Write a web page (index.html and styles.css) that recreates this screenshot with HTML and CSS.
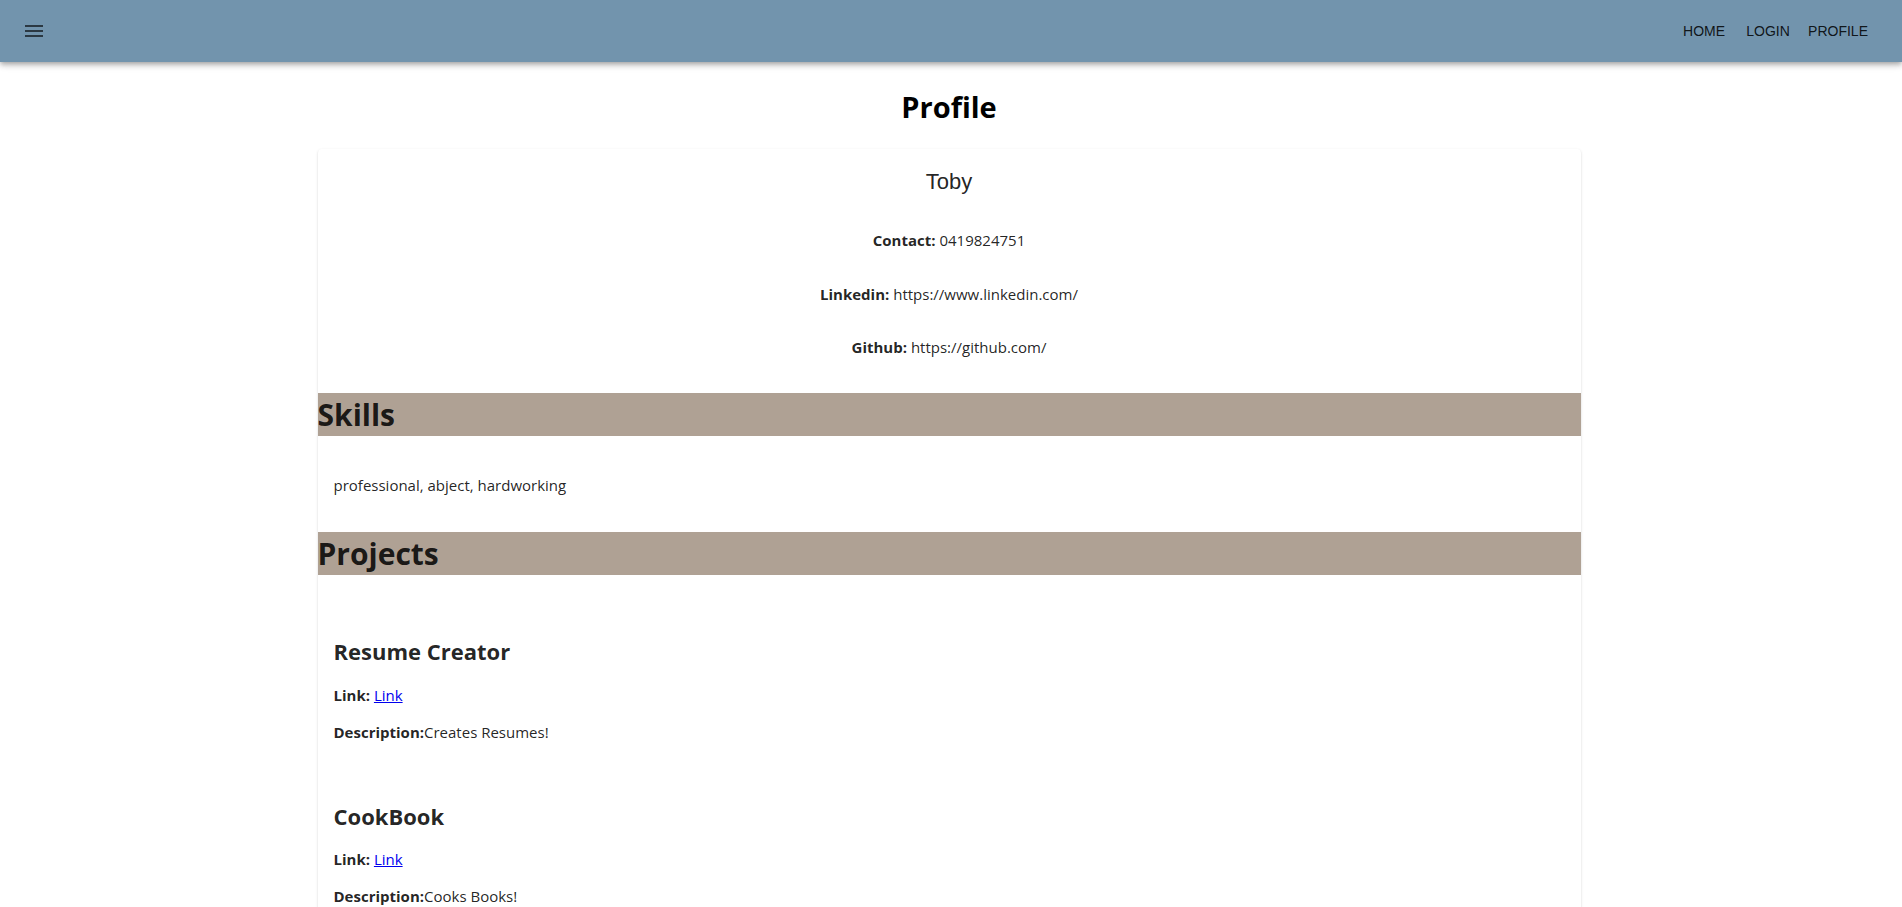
FILE: index.html
```html
<!DOCTYPE html>
<html lang="en">
<head>
<meta charset="utf-8">
<title>Profile</title>
<link rel="stylesheet" href="styles.css">
</head>
<body>
<header class="appbar">
  <button class="menu-btn" aria-label="menu">
    <svg class="menu-icon" viewBox="0 0 24 24" width="24" height="24"><path d="M3 18h18v-2H3v2zm0-5h18v-2H3v2zm0-7v2h18V6H3z"/></svg>
  </button>
  <nav class="nav">
    <a class="nav-btn" href="#">Home</a>
    <a class="nav-btn" href="#">Login</a>
    <a class="nav-btn" href="#">Profile</a>
  </nav>
</header>
<main class="page">
  <h1 class="page-title">Profile</h1>
  <section class="card">
    <div class="card-head">
      <div class="name">Toby</div>
      <div class="contacts">
        <p class="contact-row"><b>Contact:</b> 0419824751</p>
        <p class="contact-row"><b>Linkedin:</b> https://www.linkedin.com/</p>
        <p class="contact-row"><b>Github:</b> https://github.com/</p>
      </div>
    </div>
    <h2 class="bar">Skills</h2>
    <div class="skills">professional, abject, hardworking</div>
    <h2 class="bar">Projects</h2>
    <div class="project">
      <h3 class="project-title">Resume Creator</h3>
      <p class="project-line"><b>Link:</b> <a href="#">Link</a></p>
      <p class="project-line"><b>Description:</b>Creates Resumes!</p>
    </div>
    <div class="project">
      <h3 class="project-title">CookBook</h3>
      <p class="project-line"><b>Link:</b> <a href="#">Link</a></p>
      <p class="project-line"><b>Description:</b>Cooks Books!</p>
    </div>
    <div class="project">
      <h3 class="project-title">Portfolio</h3>
      <p class="project-line"><b>Link:</b> <a href="#">Link</a></p>
      <p class="project-line"><b>Description:</b>Shows Projects!</p>
    </div>
  </section>
</main>
</body>
</html>
```

FILE: styles.css
```css
* { box-sizing: border-box; }

body {
  margin: 0;
  background: #ffffff;
  font-family: "Open Sans", "Noto Sans", sans-serif;
  font-size: 15px;
  color: rgba(0, 0, 0, 0.87);
}

.appbar {
  position: relative;
  z-index: 2;
  height: 62px;
  display: flex;
  align-items: center;
  justify-content: space-between;
  padding: 0 26px 0 22px;
  background: #7294ad;
  box-shadow: 0px 2px 4px -1px rgba(0,0,0,0.2), 0px 4px 5px 0px rgba(0,0,0,0.14), 0px 1px 10px 0px rgba(0,0,0,0.12);
}

.menu-btn {
  display: flex;
  padding: 0;
  border: 0;
  background: none;
  width: 24px;
  height: 24px;
}

.menu-icon { fill: rgba(0, 0, 0, 0.62); }

.nav {
  display: flex;
  align-items: center;
}

.nav-btn {
  min-width: 64px;
  padding: 6px 8px;
  text-align: center;
  font-family: "Liberation Sans", Arial, sans-serif;
  font-size: 14px;
  line-height: 24px;
  text-transform: uppercase;
  text-decoration: none;
  color: rgba(0, 0, 0, 0.87);
}

.nav-btn:last-child { min-width: 62px; }

.page {
  display: flex;
  flex-direction: column;
  align-items: center;
  padding-right: 4px;
}

.page-title {
  margin: 25px 0 22px;
  font-size: 29px;
  line-height: 40px;
  font-weight: 700;
  color: #000;
}

.card {
  width: 1263px;
  background: #fff;
  border-radius: 4px;
  box-shadow: 0px 2px 1px -1px rgba(0,0,0,0.2), 0px 1px 1px 0px rgba(0,0,0,0.14), 0px 1px 3px 0px rgba(0,0,0,0.12);
  padding-top: 18px;
}

.card-head {
  display: flex;
  flex-direction: column;
  align-items: center;
  padding-bottom: 35px;
}

.name {
  font-family: "Liberation Sans", Arial, sans-serif;
  font-size: 22px;
  line-height: 30px;
  margin-bottom: 33px;
}

.contacts {
  display: flex;
  flex-direction: column;
  align-items: center;
  gap: 32.5px;
}

.contact-row {
  margin: 0;
  line-height: 21px;
}

.bar {
  margin: 0;
  height: 43px;
  padding: 0;
  background: #afa194;
  font-size: 30px;
  line-height: 43px;
  font-weight: 700;
}

.skills {
  padding: 38.5px 16px 36.5px;
  line-height: 21px;
}

.project {
  padding: 60px 16px 0;
}

.project + .project { padding-top: 57px; }

.project-title {
  margin: 0 0 17.5px;
  font-size: 22px;
  line-height: 32px;
  font-weight: 700;
}

.project-line {
  margin: 0 0 16px;
  line-height: 21px;
}

.project-line:last-child { margin-bottom: 0; }

.project-line a { color: #0000ee; }
```
